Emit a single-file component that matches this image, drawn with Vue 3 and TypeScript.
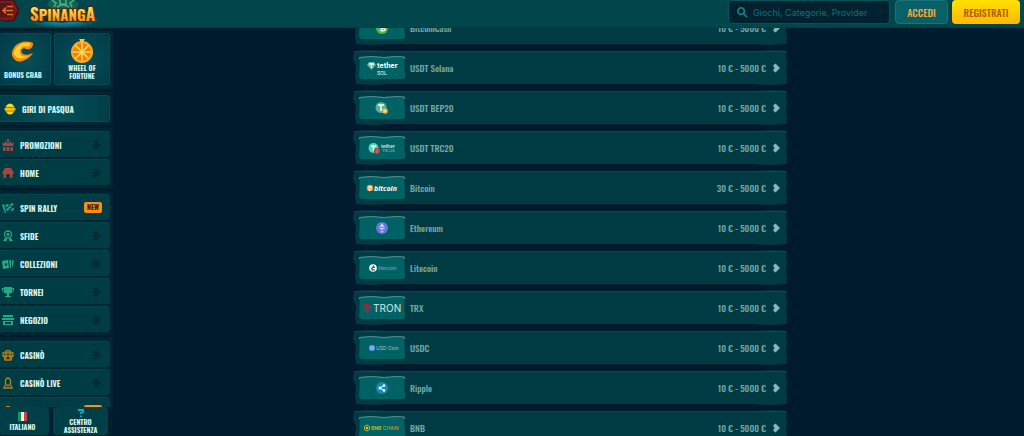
<script setup lang="ts">
interface NavItem { label: string; icon: string; isNew?: boolean }
interface NavGroup { tone: string; items: NavItem[] }
interface Method { name: string; logo: string; range: string }

const groups: NavGroup[] = [
  { tone: 'red', items: [{ label: 'PROMOZIONI', icon: 'promo' }, { label: 'HOME', icon: 'home' }] },
  {
    tone: 'green',
    items: [
      { label: 'SPIN RALLY', icon: 'flag', isNew: true },
      { label: 'SFIDE', icon: 'medal' },
      { label: 'COLLEZIONI', icon: 'cards' },
      { label: 'TORNEI', icon: 'cup' },
      { label: 'NEGOZIO', icon: 'shop' },
    ],
  },
  {
    tone: 'gold',
    items: [
      { label: 'CASINÒ', icon: 'casino' },
      { label: 'CASINÒ LIVE', icon: 'live' },
      { label: '', icon: 'casino', isNew: true },
    ],
  },
]

const methods: Method[] = [
  { name: 'BitcoinCash', logo: 'bch', range: '10 € - 5000 €' },
  { name: 'USDT Solana', logo: 'sol', range: '10 € - 5000 €' },
  { name: 'USDT BEP20', logo: 'bep', range: '10 € - 5000 €' },
  { name: 'USDT TRC20', logo: 'trc', range: '10 € - 5000 €' },
  { name: 'Bitcoin', logo: 'btc', range: '30 € - 5000 €' },
  { name: 'Ethereum', logo: 'eth', range: '10 € - 5000 €' },
  { name: 'Litecoin', logo: 'ltc', range: '10 € - 5000 €' },
  { name: 'TRX', logo: 'trx', range: '10 € - 5000 €' },
  { name: 'USDC', logo: 'usdc', range: '10 € - 5000 €' },
  { name: 'Ripple', logo: 'xrp', range: '10 € - 5000 €' },
  { name: 'BNB', logo: 'bnb', range: '10 € - 5000 €' },
]
</script>

<template>
  <div class="page">
    <header class="topbar">
      <button class="menu-toggle" aria-label="Menu">
        <svg viewBox="0 0 20 24" width="20" height="24">
          <path d="M0 0H14L19 9V13L14 21L6 22L0 20Z" fill="#4c1014" />
          <path d="M0 1H13L17.500 10L13 19.500L5 20.500L0 19Z" fill="#7b1d20" />
          <path d="M0 3H11L15 10L11 17.500H0Z" fill="#5a1518" />
          <path d="M7 6.500H13M3 10.500H13M7 14.500H13M6 7.500L3 10.500L6 13.500" fill="none" stroke="#e0701c" stroke-width="1.600" />
        </svg>
      </button>
      <a class="brand" href="#" aria-label="Spinanga">
        <svg viewBox="0 0 76 28" width="76" height="28">
          <defs>
            <linearGradient id="gold" x1="0" y1="0" x2="0" y2="1">
              <stop offset="0.300" stop-color="#ffe056" />
              <stop offset="0.800" stop-color="#f08f22" />
            </linearGradient>
            <radialGradient id="glow">
              <stop offset="0" stop-color="#0fc0ea" />
              <stop offset="0.500" stop-color="#0994bd" stop-opacity="0.700" />
              <stop offset="1" stop-color="#0ba7cf" stop-opacity="0" />
            </radialGradient>
          </defs>
          <ellipse cx="37" cy="20" rx="36" ry="8" fill="url(#glow)" />
          <path d="M8 20L14 23L24 21L36 23L50 21L60 23L68 20L66 14H10Z" fill="#0a3a3c" />
          <path d="M24 0H49L53 4L50 9H26L21 5Z" fill="#13604f" />
          <path d="M26 0L30 3L28 7M48 0L44 3L46 7M34 0V4H40V0M31 7Q37 3 43 7" fill="none" stroke="#4aa884" stroke-width="1.700" />
          <text class="brand-text" x="4" y="21" fill="url(#gold)" stroke="#55270c" stroke-width="2" paint-order="stroke"><tspan class="big">S</tspan>PINANG<tspan class="big">A</tspan></text>
        </svg>
      </a>
      <label class="search">
        <svg viewBox="0 0 12 12" width="11" height="11"><circle cx="4.500" cy="4.500" r="3.500" /><path d="M7 7L11 11" /></svg>
        <input type="text" placeholder="Giochi, Categorie, Provider" aria-label="Giochi, Categorie, Provider">
      </label>
      <button class="btn login">ACCEDI</button>
      <button class="btn register">REGISTRATI</button>
    </header>

    <div class="body">
      <aside class="sidebar">
        <div class="scroll">
          <div class="tiles">
            <a class="tile" href="#">
              <svg viewBox="0 0 26 24" width="26" height="24">
                <path d="M21 2Q11 0 5 6Q-1 14 4 19Q8 24 15 20Q20 18 23 13Q17 16 13 14Q9 10 14 8Q16 10 20 9Q24 6 23 3Z" fill="#f58c08" />
                <path d="M19 3Q11 2 6 8Q2 13 5 16Q10 21 19 16Q11 18 10 13Q9 8 14 6Q17 8 21 5Z" fill="#ffcf38" />
              </svg>
              <span>BONUS CRAB</span>
            </a>
            <a class="tile wheel" href="#">
              <svg viewBox="0 0 24 24" width="24" height="24">
                <circle cx="12" cy="13" r="11" fill="#ffac22" />
                <circle cx="12" cy="13" r="9" fill="#ef7f0b" />
                <path d="M12 13V4M12 13L18.500 6.500M12 13H21M12 13L18.500 19.500M12 13V22M12 13L5.500 19.500M12 13H3M12 13L5.500 6.500" stroke="#ffc545" stroke-width="1.800" />
                <circle cx="12" cy="13" r="2" fill="#ffda5f" />
                <path d="M9 0H15L12 5Z" fill="#ffc335" />
              </svg>
              <span>WHEEL OF<br>FORTUNE</span>
            </a>
          </div>
          <div class="group">
            <a class="nav feature" href="#">
              <svg viewBox="0 0 12 12" width="12" height="12">
                <ellipse cx="6" cy="6" rx="4.500" ry="5.500" fill="#ffd21d" />
                <path d="M1 4.500H11M1 8H11" stroke="#87801a" stroke-width="1" />
                <path d="M0.500 6.300H11.500" stroke="#f5b910" stroke-width="2" />
              </svg>
              <span>GIRI DI PASQUA</span>
            </a>
          </div>
          <nav v-for="group in groups" :key="group.tone" class="group" :class="group.tone">
            <a v-for="item in group.items" :key="item.label" class="nav" href="#">
              <svg class="ico" viewBox="0 0 12 12" width="12" height="12">
                <g v-if="item.icon === 'promo'"><path d="M0 3L2 5L3 2L5 4H7L9 2L10 5L12 3L11 7H1ZM1 8H11V12H1ZM5 0H7V3H5Z" /><path class="cut" d="M4 8V12M8 8V12" /></g>
                <path v-else-if="item.icon === 'home'" d="M0 6L3 1H9L12 6L10.500 7V11H8V8L7 7H5L4 8V11H1.500V7Z" />
                <g v-else-if="item.icon === 'flag'"><path d="M0 3L2 2L4 11H3ZM3 3L6 2L7 4L4 5ZM8 2L11 1L11.500 3L8.500 4ZM6 5L9 4L9.500 6L6.500 7ZM4 7L6 6L7 8L5 9ZM9 7L12 6V8L9.500 9Z" /></g>
                <g v-else-if="item.icon === 'medal'"><circle cx="6" cy="4.500" r="3.500" class="line" /><circle cx="6" cy="4.500" r="1.500" /><path d="M3 8L5 9L4 12L3 11L1 11ZM9 8L7 9L8 12L9 11L11 11Z" /></g>
                <g v-else-if="item.icon === 'cards'"><path d="M0 3L6 2L7 10L1 11ZM7 2L9 2L9 10L8 10ZM10 2L12 3L10 10Z" /><circle cx="4" cy="6.500" r="1.200" class="dark" /></g>
                <path v-else-if="item.icon === 'cup'" d="M2 1H10V2H12V5L9 7L7 8V10H9V11H3V10H5V8L3 7L0 5V2H2ZM1 3V5L2 5.500V3ZM10 3V5.500L11 5V3Z" fill-rule="evenodd" />
                <path v-else-if="item.icon === 'shop'" d="M1 1H11V3H1ZM0 4H12V6H0ZM1 7H11V11H1ZM3 8V10H9V8Z" fill-rule="evenodd" />
                <g v-else-if="item.icon === 'casino'"><path class="line" d="M3 3Q6 0 9 3M1 4H11V7H1ZM2 7L3 11H9L10 7M4 4V10M8 4V10" /></g>
                <g v-else><path class="line" d="M3.500 7V3Q6 -1 8.500 3V7L6 9ZM3 8L2 11H10L9 8" /></g>
              </svg>
              <span>{{ item.label }}</span>
              <b v-if="item.isNew" class="new">NEW</b>
              <svg v-else class="pin" viewBox="0 0 10 12" width="10" height="12"><path d="M4 1V11M1 3H3M0 6H9M1 9H3M5 3L7 4M5 9L7 8" /></svg>
            </a>
          </nav>
        </div>
        <div class="bottom">
          <button class="foot lang">
            <svg viewBox="0 0 9 9" width="9" height="9"><path d="M0 0H3V9H0Z" fill="#189655" /><path d="M3 0H6V9H3Z" fill="#f4f4ed" /><path d="M6 0H9V9H6Z" fill="#d53b45" /></svg>
            <span>ITALIANO</span>
          </button>
          <button class="foot help">
            <svg viewBox="0 0 8 9" width="8" height="9"><path d="M1 2H6V4L4 5V6M4 7.500V9" fill="none" stroke="#13aab1" stroke-width="2" /></svg>
            <span>CENTRO<br>ASSISTENZA</span>
          </button>
        </div>
      </aside>

      <main class="content">
        <ul class="methods">
          <li v-for="m in methods" :key="m.name">
            <button class="method">
              <svg class="plate" viewBox="0 0 435 36" preserveAspectRatio="none" aria-hidden="true">
                <path d="M1 1L18 0L32 1H404L420 0L434 1L433 7L434 13L433 20L434 27L433 34L418 35L400 34H36L20 35L3 34L2 25L3 17L0 9Z" />
                <path class="edge" d="M2 1.500H433" />
              </svg>
              <span class="card">
                <svg viewBox="0 0 46 24" width="46" height="24">
                  <path d="M1 1L12 0L25 1L38 0L45 1L46 21L44 23H2L0 21Z" fill="#006264" />
                  <path d="M0.500 3V1.500L12 0.500L25 1.500L38 0.500L45.500 1V3" fill="none" stroke="#578f90" />
                  <g v-if="m.logo === 'bch'"><circle cx="23" cy="12" r="6" fill="#55b944" /><text x="20.500" y="15" font-size="8" class="bold" fill="#fff">₿</text></g>
                  <g v-else-if="m.logo === 'sol'">
                    <path d="M10 6H15L17 9L12.500 14L8 9Z" fill="#63b7a0" /><path d="M10 8H15M12.500 8V12" stroke="#fff" stroke-width="1.300" />
                    <text x="18" y="12" font-size="7" class="bold geo" fill="#fff">tether</text><text x="18" y="19" font-size="5" class="geo" fill="#fff">SOL</text>
                  </g>
                  <g v-else-if="m.logo === 'bep'"><circle cx="22" cy="11.500" r="5.500" fill="#5aaf99" /><path d="M19 9H25M22 9V15" stroke="#fff" stroke-width="1.500" /><circle cx="26" cy="15" r="2.800" fill="#edb43e" /><path d="M26 13.500L27.500 15L26 16.500L24.500 15Z" fill="#ffe4a0" /></g>
                  <g v-else-if="m.logo === 'trc'">
                    <circle cx="14.500" cy="12" r="5" fill="#4ddbae" /><path d="M12 10H17M14.500 10V15" stroke="#fff" stroke-width="1.500" /><circle cx="18" cy="15" r="3" fill="#c33640" /><path d="M17 14H19.500L18 17Z" fill="none" stroke="#e98990" stroke-width="0.500" />
                    <text x="22" y="12" font-size="5" class="bold" fill="#cce3df">tether</text><text x="23" y="16" font-size="4" fill="#a5cbc5">TRC20</text>
                  </g>
                  <g v-else-if="m.logo === 'btc'"><circle cx="11" cy="12" r="3.300" fill="#f7931a" /><text x="9" y="14" font-size="5" class="bold" fill="#fff">₿</text><text x="15" y="15" font-size="7" class="bold ital wide" fill="#fff">bitcoin</text></g>
                  <g v-else-if="m.logo === 'eth'"><circle cx="23" cy="12" r="6" fill="#6875df" /><path d="M23 7L26 12L23 14L20 12ZM20.500 14L23 17L25.500 14L23 15.500Z" fill="#d5d7ff" /><path d="M20.500 12L23 11L25.500 12" fill="none" stroke="#6875df" /></g>
                  <g v-else-if="m.logo === 'ltc'"><circle cx="14" cy="12" r="3.800" fill="#fff" /><path d="M14.500 9.500L13 14H16M12 12.500L16 11" fill="none" stroke="#254f5c" stroke-width="1.100" /><text x="19" y="14" font-size="6" class="ital" fill="#7ab1b2">litecoin</text></g>
                  <g v-else-if="m.logo === 'trx'"><path d="M5 8L11 9L13 11L8 17ZM5 8L9 12L8 17M9 12L11 9M9 12L13 11" fill="none" stroke="#b51f3c" /><text x="14" y="16" font-size="10" class="geo mid" fill="#bdd7d6">TRON</text></g>
                  <g v-else-if="m.logo === 'usdc'"><circle cx="13" cy="12" r="3.200" fill="#4986df" /><path d="M12 10Q10.500 12 12 14M14 10Q15.500 12 14 14M13 10V14" fill="none" stroke="#b9d8ff" stroke-width="0.700" /><text x="17" y="14" font-size="5" class="geo" fill="#a0c8ca">USD Coin</text></g>
                  <g v-else-if="m.logo === 'xrp'"><circle cx="23" cy="12" r="6" fill="#1687b8" /><path d="M21 12L25 9.500M21 12L25 14.500M21 12H22" stroke="#fff" /><circle cx="21" cy="12" r="1.500" fill="#fff" /><circle cx="25" cy="9.500" r="1.300" fill="#fff" /><circle cx="25" cy="14.500" r="1.300" fill="#fff" /></g>
                  <g v-else><path d="M8 9L10.500 10.500V13.500L8 15L5.500 13.500V10.500Z" fill="none" stroke="#d8ad13" /><circle cx="8" cy="12" r="1.300" fill="#f0bd12" /><text x="12" y="14" font-size="5" class="geo" fill="#d3ad19"><tspan class="bold">BNB</tspan> CHAIN</text></g>
                </svg>
              </span>
              <span class="name">{{ m.name }}</span>
              <span class="range">{{ m.range }}</span>
              <svg class="chev" viewBox="0 0 7 10" width="7" height="10"><path d="M0 2.500L2.500 0.500L7 5L2.500 9.500L0 7.500L1.500 5Z" /></svg>
            </button>
          </li>
        </ul>
      </main>
    </div>
  </div>
</template>

<style>
body { margin: 0; background: #001a2e; }
</style>

<style scoped>
* { box-sizing: border-box; }
.page { height: 100vh; display: flex; flex-direction: column; overflow: hidden; background: #001a2e; font-family: Oswald, "Roboto Condensed", "Noto Sans", sans-serif; }
button { font-family: inherit; border: 0; padding: 0; background: none; cursor: pointer; }
a { text-decoration: none; color: inherit; }
.topbar { flex: none; height: 28px; display: flex; align-items: flex-start; padding-right: 4px; background: #00464b; border-bottom: 1px solid #003c43; }
.menu-toggle { width: 20px; height: 24px; }
.menu-toggle svg, .brand svg { display: block; }
.brand { margin-left: 6px; }
.brand-text { font-weight: 700; font-size: 15px; }
.big { font-size: 17px; }
.search { margin-left: auto; width: 162px; height: 24px; display: flex; align-items: center; gap: 5px; padding: 0 8px; background: #00222f; border: 1px solid #06525b; border-radius: 4px; }
.search svg { flex: none; fill: none; stroke: #1b7980; stroke-width: 2; }
.search input { flex: 1; min-width: 0; padding: 0; border: 0; outline: 0; background: none; font: 9px Inter, sans-serif; color: #4ba0a5; }
.search input::placeholder { color: #136f79; opacity: 1; }
.btn { height: 24px; border-radius: 4px; font-size: 10px; font-weight: 500; }
.login { width: 53px; margin-left: 5px; background: #096067; border: 1px solid #17747a; color: #f3a83b; }
.register { width: 68px; margin-left: 4px; background: linear-gradient(#ffe000, #ffb703); color: #ad5b00; }
.body { flex: 1; min-height: 0; display: flex; }
.sidebar { flex: none; width: 113px; display: flex; flex-direction: column; background: #001e2e; color: #d7f5ef; }
.scroll { flex: 1; min-height: 0; overflow: hidden; }
.tiles { display: flex; gap: 3px; margin-top: 3px; padding: 2px 3px 4px 0; background: #002835; }
.tile { width: 51px; height: 52px; display: flex; flex-direction: column; align-items: center; padding: 6px 4px 0 0; font-size: 7px; line-height: 8px; font-weight: 700; text-align: center; white-space: nowrap; border: 1px solid #064a54; border-left: 0; border-radius: 2px; background: radial-gradient(#075059, #003b46); }
.tile span { margin-top: 7px; }
.tile.wheel { width: 56px; padding: 5px 0 0; border-left: 1px solid #064a54; }
.tile.wheel span { margin-top: 1px; }
.group { display: flex; flex-direction: column; gap: 2px; margin-top: 3px; padding: 3px 3px 3px 0; background: #002631; border-radius: 0 3px 3px 0; }
.nav { height: 26px; display: flex; align-items: center; gap: 6px; padding: 0 8px 0 2px; font-size: 8px; line-height: 12px; font-weight: 700; background: #003c44; border-top: 1px solid #05464d; border-radius: 0 3px 3px 0; }
.feature { height: 27px; padding-left: 4px; background: linear-gradient(90deg, #003d47, #07515a, #003d47); border: 1px solid #064a54; border-left: 0; }
.ico { fill: currentColor; }
.nav span { color: #d7f5ef; }
.line { fill: none; stroke: currentColor; stroke-width: 1.3; }
.cut { stroke: #003c44; }
.dark { fill: #003c44; }
.red { color: #a9453e; }
.green { color: #22aa82; }
.gold { color: #b98119; }
.pin { margin-left: auto; fill: none; stroke: #00262f; stroke-width: 1.3; }
.new { margin-left: auto; padding: 0 3px; font-size: 7px; line-height: 11px; background: #ff8c16; color: #3d2110; border-radius: 2px; }
.bottom { flex: none; height: 29px; display: flex; gap: 4px; padding-right: 5px; background: #001e2e; }
.foot { flex: 1; height: 28px; display: flex; flex-direction: column; align-items: center; justify-content: center; gap: 2px; background: #003f47; border-radius: 3px; color: #d7f5ef; font-size: 7px; line-height: 8px; font-weight: 700; }
.lang { flex: 0 0 49px; padding-right: 4px; }
.help { gap: 1px; }
.content { flex: 1; min-width: 0; overflow: hidden; display: flex; justify-content: center; align-items: flex-start; padding-left: 4px; }
.methods { flex: 0 1 435px; list-style: none; margin: -18px 0 0 0; padding: 0; display: flex; flex-direction: column; gap: 4px; }
.method { position: relative; width: 100%; height: 36px; display: flex; align-items: center; padding: 0 8px 0 6px; font-size: 9px; line-height: 14px; font-weight: 500; color: #72a9a9; }
.plate { position: absolute; inset: 0; width: 100%; height: 100%; fill: #003b43; }
.edge { fill: none; stroke: #054c53; }
.card, .name, .range, .chev { position: relative; }
.card svg { display: block; }
.name { margin-left: 5px; }
.range { margin-left: auto; }
.chev { margin-left: 7px; fill: #83b8b7; }
.card text { font-weight: 400; font-family: "Liberation Sans", sans-serif; }
.card text.bold, .card .bold { font-weight: 700; }
.card text.mid { font-weight: 500; }
.card .ital { font-style: italic; }
.card text.geo { font-family: Inter, sans-serif; }
.card text.wide { font-family: "Open Sans", sans-serif; }
</style>
